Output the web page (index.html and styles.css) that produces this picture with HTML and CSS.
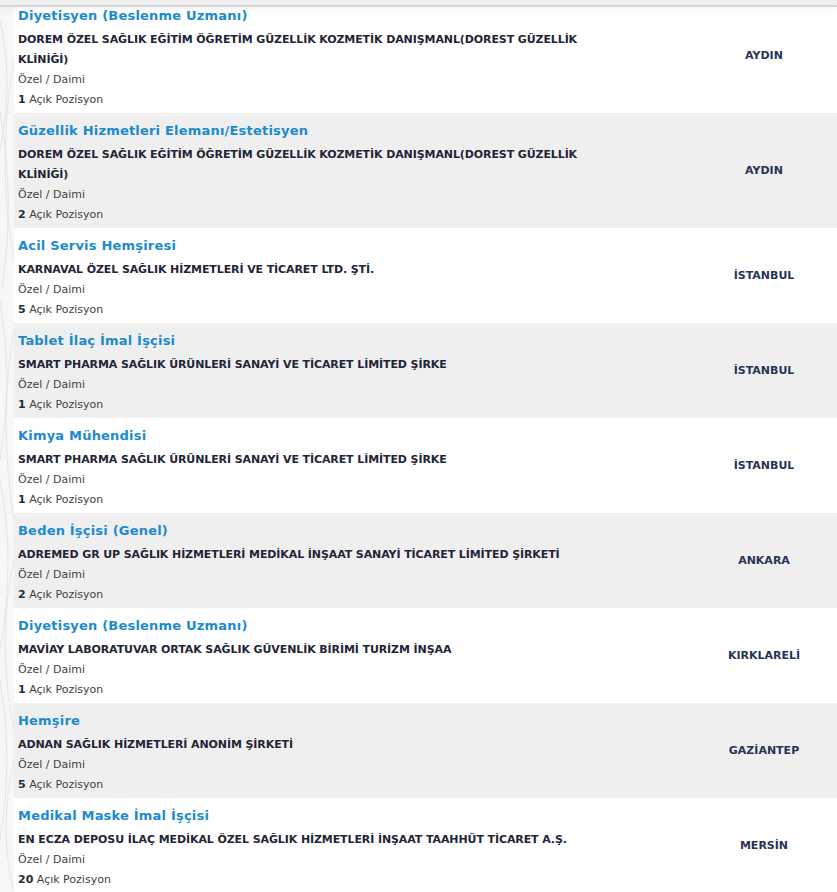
FILE: index.html
```html
<!DOCTYPE html>
<html lang="tr">
<head>
<meta charset="utf-8">
<title>İş İlanları</title>
<link rel="stylesheet" href="styles.css">
</head>
<body>
<svg class="deco" width="14" height="892" viewBox="0 0 14 892" aria-hidden="true">
  <g fill="none" stroke="#e6e6e6" stroke-width="1">
    <path d="M0 20 Q14 80 0 150"/>
    <path d="M0 110 Q16 200 2 290"/>
    <path d="M14 60 Q-4 160 14 260"/>
    <path d="M0 300 Q14 380 0 460"/>
    <path d="M14 330 Q-2 420 14 520"/>
    <path d="M0 480 Q16 560 0 650"/>
    <path d="M14 560 Q-4 640 14 730"/>
    <path d="M0 680 Q14 760 0 840"/>
    <path d="M14 760 Q-2 830 14 892"/>
  </g>
</svg>
<div class="topbar"></div>
<div class="list">
  <div class="row">
    <div class="info">
      <a class="title">Diyetisyen (Beslenme Uzmanı)</a>
      <div class="company">DOREM ÖZEL SAĞLIK EĞİTİM ÖĞRETİM GÜZELLİK KOZMETİK DANIŞMANL(DOREST GÜZELLİK KLİNİĞİ)</div>
      <div class="meta">Özel / Daimi</div>
      <div class="meta"><b>1</b> Açık Pozisyon</div>
    </div>
    <div class="city">AYDIN</div>
  </div>
  <div class="row alt">
    <div class="info">
      <a class="title">Güzellik Hizmetleri Elemanı/Estetisyen</a>
      <div class="company">DOREM ÖZEL SAĞLIK EĞİTİM ÖĞRETİM GÜZELLİK KOZMETİK DANIŞMANL(DOREST GÜZELLİK KLİNİĞİ)</div>
      <div class="meta">Özel / Daimi</div>
      <div class="meta"><b>2</b> Açık Pozisyon</div>
    </div>
    <div class="city">AYDIN</div>
  </div>
  <div class="row">
    <div class="info">
      <a class="title">Acil Servis Hemşiresi</a>
      <div class="company">KARNAVAL ÖZEL SAĞLIK HİZMETLERİ VE TİCARET LTD. ŞTİ.</div>
      <div class="meta">Özel / Daimi</div>
      <div class="meta"><b>5</b> Açık Pozisyon</div>
    </div>
    <div class="city">İSTANBUL</div>
  </div>
  <div class="row alt">
    <div class="info">
      <a class="title">Tablet İlaç İmal İşçisi</a>
      <div class="company">SMART PHARMA SAĞLIK ÜRÜNLERİ SANAYİ VE TİCARET LİMİTED ŞİRKE</div>
      <div class="meta">Özel / Daimi</div>
      <div class="meta"><b>1</b> Açık Pozisyon</div>
    </div>
    <div class="city">İSTANBUL</div>
  </div>
  <div class="row">
    <div class="info">
      <a class="title">Kimya Mühendisi</a>
      <div class="company">SMART PHARMA SAĞLIK ÜRÜNLERİ SANAYİ VE TİCARET LİMİTED ŞİRKE</div>
      <div class="meta">Özel / Daimi</div>
      <div class="meta"><b>1</b> Açık Pozisyon</div>
    </div>
    <div class="city">İSTANBUL</div>
  </div>
  <div class="row alt">
    <div class="info">
      <a class="title">Beden İşçisi (Genel)</a>
      <div class="company">ADREMED GR UP SAĞLIK HİZMETLERİ MEDİKAL İNŞAAT SANAYİ TİCARET LİMİTED ŞİRKETİ</div>
      <div class="meta">Özel / Daimi</div>
      <div class="meta"><b>2</b> Açık Pozisyon</div>
    </div>
    <div class="city">ANKARA</div>
  </div>
  <div class="row">
    <div class="info">
      <a class="title">Diyetisyen (Beslenme Uzmanı)</a>
      <div class="company">MAVİAY LABORATUVAR ORTAK SAĞLIK GÜVENLİK BİRİMİ TURİZM İNŞAA</div>
      <div class="meta">Özel / Daimi</div>
      <div class="meta"><b>1</b> Açık Pozisyon</div>
    </div>
    <div class="city">KIRKLARELİ</div>
  </div>
  <div class="row alt">
    <div class="info">
      <a class="title">Hemşire</a>
      <div class="company">ADNAN SAĞLIK HİZMETLERİ ANONİM ŞİRKETİ</div>
      <div class="meta">Özel / Daimi</div>
      <div class="meta"><b>5</b> Açık Pozisyon</div>
    </div>
    <div class="city">GAZİANTEP</div>
  </div>
  <div class="row">
    <div class="info">
      <a class="title">Medikal Maske İmal İşçisi</a>
      <div class="company">EN ECZA DEPOSU İLAÇ MEDİKAL ÖZEL SAĞLIK HİZMETLERİ İNŞAAT TAAHHÜT TİCARET A.Ş.</div>
      <div class="meta">Özel / Daimi</div>
      <div class="meta"><b>20</b> Açık Pozisyon</div>
    </div>
    <div class="city">MERSİN</div>
  </div>
</div>
</body>
</html>
```
FILE: styles.css
```css
html, body {
  margin: 0;
  padding: 0;
}
body {
  background: #f7f7f7;
  font-family: "DejaVu Sans", Verdana, sans-serif;
  overflow: hidden;
  position: relative;
}
.deco {
  position: absolute;
  left: 0;
  top: 0;
}
.topbar {
  position: fixed;
  top: 0;
  left: 0;
  right: 0;
  height: 5px;
  background: #f0f0f0;
  border-bottom: 2px solid #d6d6d6;
  box-shadow: 0 2px 10px rgba(0, 0, 0, 0.06);
  z-index: 5;
}
.list {
  margin: -2px 0 0 14px;
  position: relative;
}
.row {
  display: grid;
  grid-template-columns: 1fr 146px;
  background: #ffffff;
}
.row.alt {
  background: #efefef;
}
.info {
  padding: 8px 4px 3px 4px;
  display: flex;
  flex-direction: column;
}
.title {
  color: #1b8bd0;
  font-weight: bold;
  font-size: 13px;
  line-height: 20px;
  margin-bottom: 4px;
  letter-spacing: 0.2px;
}
.company {
  color: #222536;
  font-weight: bold;
  font-size: 11px;
  line-height: 20px;
  max-width: 590px;
  letter-spacing: -0.1px;
}
.meta {
  color: #4a3d44;
  font-size: 11px;
  line-height: 20px;
}
.meta b {
  color: #262a3b;
}
.city {
  display: flex;
  align-items: center;
  justify-content: center;
  color: #283454;
  font-weight: bold;
  font-size: 11px;
}
```
